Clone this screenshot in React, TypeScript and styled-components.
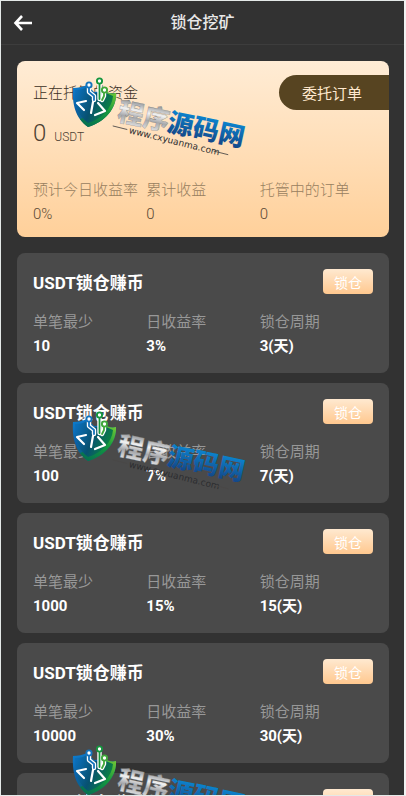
import React from "react";
import styled, { createGlobalStyle } from "styled-components";

const GlobalStyle = createGlobalStyle`
  * { box-sizing: border-box; }
  html, body, #root { height: 100%; }
  body {
    margin: 0;
    background: #323232;
    font-family: Roboto, "Noto Sans CJK SC", sans-serif;
    color: #fff;
  }
  button { font: inherit; border: 0; padding: 0; cursor: pointer; }
`;

const Screen = styled.div`
  position: relative;
  display: flex;
  flex-direction: column;
  height: 100vh;
  overflow: hidden;
  border: 1px solid #e4e9e8;
  border-right: 2px solid #f0f2f2;
  background: #323232;
`;

const Header = styled.header`
  display: grid;
  flex: none;
  grid-template-columns: 44px 1fr 44px;
  align-items: center;
  height: 44px;
  border-bottom: 1px solid #3d3d3d;
`;

const BackButton = styled.button`
  display: flex;
  align-items: center;
  justify-content: center;
  height: 40px;
  background: none;
  color: #fff;
`;

const PageTitle = styled.h1`
  margin: 0;
  text-align: center;
  font-size: 16px;
  line-height: 24px;
  font-weight: 500;
  color: #e8e8e8;
`;

const Content = styled.main`
  flex: 1;
  min-height: 0;
  overflow-y: auto;
  scrollbar-width: none;
  padding: 16px 15px 16px 16px;
`;

const Summary = styled.section`
  height: 176px;
  margin-bottom: 16px;
  padding: 14px 0 0 16px;
  border-radius: 8px;
  background: linear-gradient(#ffecd5, #ffd09a);
  color: #4c4032;
`;

const SummaryTop = styled.div`
  display: flex;
  justify-content: space-between;
  align-items: center;
  height: 35px;
`;

const SummaryTitle = styled.h2`
  margin: 0;
  font-size: 15px;
  line-height: 22px;
  font-weight: 300;
  color: #3b3024;
`;

const OrdersButton = styled.button`
  width: 110px;
  height: 35px;
  padding-right: 4px;
  border-radius: 18px 0 0 18px;
  background: #574421;
  color: #ffe9cf;
  font-size: 15px;
  text-align: center;
`;

const Balance = styled.p`
  display: flex;
  align-items: baseline;
  gap: 8px;
  margin: 7px 0 0;
  font-size: 24px;
  line-height: 32px;
  font-weight: 300;
`;

const Unit = styled.span`
  font-size: 12px;
`;

const Stats = styled.dl<{ $tone: "light" | "dark" }>`
  display: grid;
  grid-template-columns: repeat(3, 1fr);
  margin: ${(p) => (p.$tone === "light" ? "25px 16px 0 0" : "15px 0 0")};
  color: ${(p) => (p.$tone === "light" ? "#5b4a36" : "#fff")};
  font-weight: ${(p) => (p.$tone === "light" ? 300 : 700)};
`;

const Label = styled.dt<{ $tone: "light" | "dark" }>`
  font-size: 15px;
  line-height: 24px;
  white-space: nowrap;
  font-weight: ${(p) => (p.$tone === "light" ? 300 : 400)};
  color: ${(p) => (p.$tone === "light" ? "#98805f" : "#989898")};
`;

const Value = styled.dd`
  margin: 0;
  font-size: 15px;
  line-height: 24px;
`;

const Plans = styled.ul`
  display: flex;
  flex-direction: column;
  gap: 10px;
  margin: 0;
  padding: 0;
  list-style: none;
`;

const PlanCard = styled.li`
  height: 120px;
  flex: none;
  padding: 16px;
  border-radius: 8px;
  background: #4a4a4a;
`;

const PlanTop = styled.div`
  display: flex;
  justify-content: space-between;
  align-items: flex-start;
`;

const PlanTitle = styled.h2`
  margin: 2px 0 0;
  font-size: 17px;
  line-height: 24px;
  font-weight: 700;
`;

const LockButton = styled.button`
  width: 50px;
  height: 25px;
  border-radius: 4px;
  background: linear-gradient(#ffe9d0, #ffc88f);
  color: #fff;
  font-size: 14px;
`;

const Mark = styled.svg<{ $top: number }>`
  position: absolute;
  left: 59px;
  top: ${(p) => p.$top}px;
  pointer-events: none;
`;

function Watermark({ top, id }: { top: number; id: string }) {
  return (
    <Mark $top={top} width="190" height="100" viewBox="0 0 190 100" aria-hidden="true">
      <defs>
        <linearGradient id={`${id}-blue`} x1="0" y1="0" x2="0.5" y2="1">
          <stop offset="0" stopColor="#0d7fd0" />
          <stop offset="0.5" stopColor="#0b5fa6" />
          <stop offset="1" stopColor="#0a6a6a" />
        </linearGradient>
        <linearGradient id={`${id}-green`} x1="1" y1="0" x2="0.2" y2="1">
          <stop offset="0" stopColor="#7acb35" />
          <stop offset="0.45" stopColor="#159a3d" />
          <stop offset="1" stopColor="#067050" />
        </linearGradient>
        <linearGradient id={`${id}-core`} x1="0" y1="0.2" x2="1" y2="0.6">
          <stop offset="0" stopColor="#0b6fbb" />
          <stop offset="0.5" stopColor="#075170" />
          <stop offset="1" stopColor="#0b8a3a" />
        </linearGradient>
        <linearGradient id={`${id}-silver`} x1="0" y1="0" x2="0" y2="1">
          <stop offset="0.2" stopColor="#8f9296" />
          <stop offset="0.45" stopColor="#f1f1f1" />
          <stop offset="0.65" stopColor="#a6a8ac" />
          <stop offset="0.9" stopColor="#e2e2e2" />
        </linearGradient>
        <linearGradient id={`${id}-text`} x1="0" y1="0" x2="0" y2="1">
          <stop offset="0.15" stopColor="#0b8ad6" />
          <stop offset="1" stopColor="#153c7b" />
        </linearGradient>
      </defs>
      <path d="M13 23C18 23 23 22 27 20L34 27L45 26C48 28 52 29 56 28C57 43 45 57 28 62C15 53 12 38 13 23Z" fill={`url(#${id}-blue)`} />
      <path d="M45 26C48 28 52 29 56 28C57 43 45 57 28 62C25 60 22 57 20 54C34 50 43 40 45 26Z" fill={`url(#${id}-green)`} />
      <path d="M15 25C20 25 24 24 27 22L34 28H46L53 31C52 43 42 54 28 58C18 51 14 38 15 25Z" fill={`url(#${id}-core)`} />
      <g fill="none" strokeLinecap="round" strokeLinejoin="round">
        <path d="M29 22V27L34 31V35M39.5 18V34M44 27V31L42 35" stroke="#fff" strokeWidth="4.4" />
        <path d="M29 22V27L34 31V35" stroke="#1474bd" strokeWidth="1.8" />
        <path d="M39.5 18V34" stroke="#15953e" strokeWidth="1.8" />
        <path d="M44 27V31L42 35" stroke="#3fa83a" strokeWidth="1.8" />
        <circle cx="29" cy="20" r="2.6" fill="#fff" stroke="#1474bd" strokeWidth="1.9" />
        <circle cx="39.5" cy="16" r="2.6" fill="#fff" stroke="#15953e" strokeWidth="1.9" />
        <circle cx="44.5" cy="25" r="2.6" fill="#fff" stroke="#3fa83a" strokeWidth="1.9" />
        <path d="M26 36L17 38L24 45M33 37L31 48M38 38L45 46L35 50" stroke="#fff" strokeWidth="2.2" />
      </g>
      <g transform="rotate(12 56 56)">
        <g fontSize="26" fontWeight="900" fontFamily="'Noto Sans CJK SC', sans-serif">
          <text x="56" y="55" fill={`url(#${id}-silver)`} stroke="#777" strokeWidth="0.3">程序</text>
          <text x="107" y="55" fill={`url(#${id}-text)`}>源码网</text>
        </g>
      </g>
      <g transform="rotate(14 69 66)">
        <text x="69" y="68" fontSize="9" fontFamily="'DejaVu Sans', sans-serif" fill="#2c2d30">www.cxyuanma.com</text>
        <path d="M52 65H67M156 65H171" stroke="#494746" strokeWidth="0.8" />
      </g>
    </Mark>
  );
}

const summaryStats = [
  { label: "预计今日收益率", value: "0%" },
  { label: "累计收益", value: "0" },
  { label: "托管中的订单", value: "0" },
];

const plans = [
  { min: "10", rate: "3%", days: 3 },
  { min: "100", rate: "7%", days: 7 },
  { min: "1000", rate: "15%", days: 15 },
  { min: "10000", rate: "30%", days: 30 },
  { min: "100000", rate: "45%", days: 45 },
];

function StatList({ tone, items }: { tone: "light" | "dark"; items: { label: string; value: string }[] }) {
  return (
    <Stats $tone={tone}>
      {items.map((item) => (
        <div key={item.label}>
          <Label $tone={tone}>{item.label}</Label>
          <Value>{item.value}</Value>
        </div>
      ))}
    </Stats>
  );
}

export default function App() {
  return (
    <Screen>
      <GlobalStyle />
      <Header>
        <BackButton type="button" aria-label="返回">
          <svg width="20" height="18" viewBox="0 0 20 18" fill="none" stroke="currentColor" strokeWidth="2.6">
            <path d="M9 2L2.5 9L9 16M3 9H19" />
          </svg>
        </BackButton>
        <PageTitle>锁仓挖矿</PageTitle>
      </Header>
      <Content>
        <Summary>
          <SummaryTop>
            <SummaryTitle>正在托管的资金</SummaryTitle>
            <OrdersButton type="button">委托订单</OrdersButton>
          </SummaryTop>
          <Balance>
            0 <Unit>USDT</Unit>
          </Balance>
          <StatList tone="light" items={summaryStats} />
        </Summary>
        <Plans>
          {plans.map((plan) => (
            <PlanCard key={plan.min}>
              <PlanTop>
                <PlanTitle>USDT锁仓赚币</PlanTitle>
                <LockButton type="button">锁仓</LockButton>
              </PlanTop>
              <StatList
                tone="dark"
                items={[
                  { label: "单笔最少", value: plan.min },
                  { label: "日收益率", value: plan.rate },
                  { label: "锁仓周期", value: `${plan.days}(天)` },
                ]}
              />
            </PlanCard>
          ))}
        </Plans>
      </Content>
      <Watermark top={64} id="wm1" />
      <Watermark top={398} id="wm2" />
      <Watermark top={732} id="wm3" />
    </Screen>
  );
}
